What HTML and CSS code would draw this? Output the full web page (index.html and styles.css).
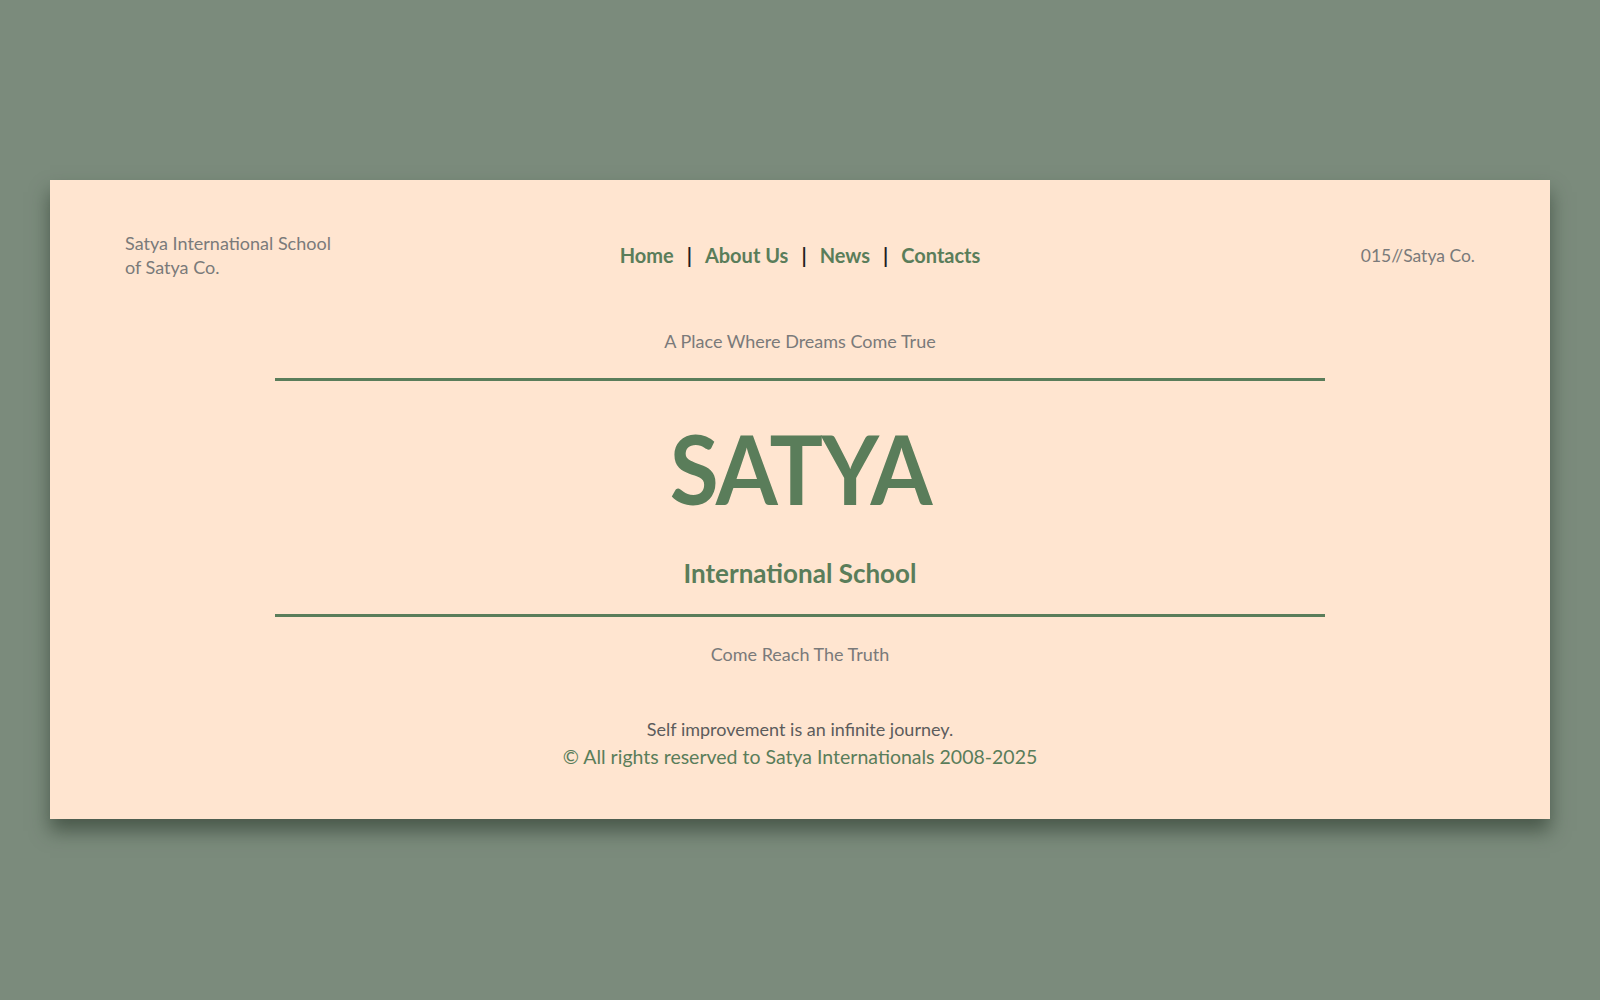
FILE: index.html
```html
<!DOCTYPE html>
<html lang="en">
<head>
<meta charset="utf-8">
<title>Satya International School</title>
<link rel="stylesheet" href="styles.css">
</head>
<body>
<main class="card">
  <header class="top">
    <div class="brand">Satya International School<br>of Satya Co.</div>
    <nav class="nav">
      <a href="#">Home</a><span class="sep">|</span>
      <a href="#">About Us</a><span class="sep">|</span>
      <a href="#">News</a><span class="sep">|</span>
      <a href="#">Contacts</a>
    </nav>
    <div class="code">015//Satya Co.</div>
  </header>
  <section class="hero">
    <p class="tag">A Place Where Dreams Come True</p>
    <hr class="rule">
    <h1 class="title">SATYA</h1>
    <h2 class="sub">International School</h2>
    <hr class="rule rule-2">
    <p class="tag tag-2">Come Reach The Truth</p>
  </section>
  <footer class="foot">
    <p class="quote">Self improvement is an infinite journey.</p>
    <p class="copy">© All rights reserved to Satya Internationals 2008-2025</p>
  </footer>
</main>
</body>
</html>
```

FILE: styles.css
```css
html, body {
  margin: 0;
  padding: 0;
}
body {
  background: #7b8b7c;
  font-family: "Lato", "Open Sans", sans-serif;
  min-height: 1000px;
  padding-top: 180px;
  box-sizing: border-box;
}
.card {
  display: block;
  margin: 0 50px;
  background: #ffe5d0;
  box-shadow: 0 12px 18px rgba(40, 55, 42, 0.6);
  padding: 51px 75px 48px;
  height: 639px;
  box-sizing: border-box;
}
.top {
  display: flex;
  justify-content: space-between;
  align-items: center;
}
.brand {
  color: #7a7a7a;
  font-size: 18px;
  line-height: 24px;
  width: 240px;
}
.code {
  color: #7a7a7a;
  font-size: 17.5px;
  width: 240px;
  text-align: right;
}
.nav {
  display: flex;
  align-items: center;
  gap: 13px;
  font-size: 20px;
  font-weight: 700;
}
.nav a {
  color: #5a7d5a;
  text-decoration: none;
}
.sep {
  color: #1e1e1e;
  font-weight: 700;
}
.hero {
  display: flex;
  flex-direction: column;
  align-items: center;
  margin: 50px -75px 0;
}
.tag {
  margin: 0;
  color: #7a7a7a;
  font-size: 18px;
  line-height: 24px;
}
.rule {
  width: 70%;
  border: 0;
  height: 3px;
  background: #5a7d5a;
  margin: 25px 0 0;
}
.title {
  margin: 37px 0 0;
  color: #5a7d5a;
  font-size: 96px;
  line-height: 100px;
  font-weight: 700;
  letter-spacing: -2px;
  transform: scaleX(0.93);
}
.sub {
  margin: 38px 0 0;
  color: #5a7d5a;
  font-size: 26px;
  line-height: 34px;
  font-weight: 700;
}
.rule-2 {
  margin-top: 24px;
}
.tag-2 {
  margin-top: 25px;
}
.foot {
  text-align: center;
  margin-top: 51px;
}
.quote {
  margin: 0;
  color: #5c5c5c;
  font-size: 18px;
  line-height: 24px;
}
.copy {
  margin: 2px 0 0;
  color: #5a7d5a;
  font-size: 19.5px;
  line-height: 28px;
}
```
